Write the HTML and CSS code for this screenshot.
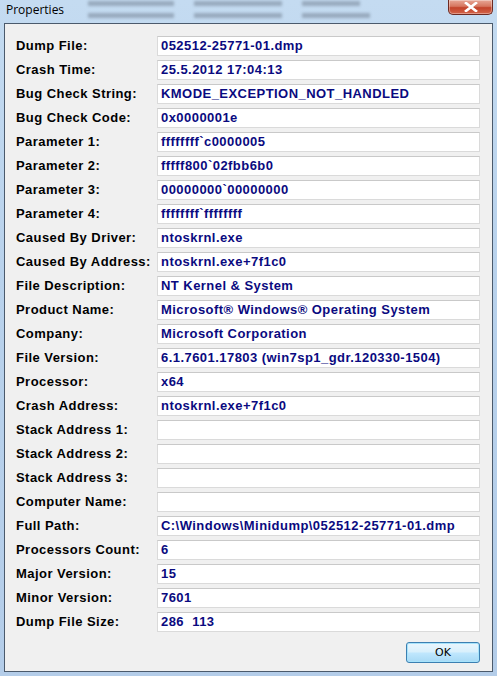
FILE: index.html
```html
<!DOCTYPE html>
<html lang="en">
<head>
    <meta charset="UTF-8">
    <title>Properties</title>
    <link rel="stylesheet" href="styles.css">
</head>
<body>
    <div class="window">
        <header class="titlebar">
            <span class="title">Properties</span>
            <div class="blur-cols">
                <div class="blur-col"><i class="b1"></i><i class="b1"></i></div>
                <div class="blur-col"><i class="b2"></i><i class="b2"></i></div>
                <div class="blur-col"><i class="b3"></i><i class="b4"></i></div>
            </div>
            <button class="close" aria-label="Close">
                <svg width="14" height="10" viewBox="0 0 14 10">
                    <path d="M2 1 L12 9 M12 1 L2 9" stroke="#fff" stroke-width="2.6" stroke-linecap="square"/>
                    <path d="M2 1 L12 9 M12 1 L2 9" stroke="#fff" stroke-width="1.4"/>
                </svg>
            </button>
        </header>
        <main class="client">
            <div class="props">
                <label>Dump File:</label><div class="box">052512-25771-01.dmp</div>
                <label>Crash Time:</label><div class="box">25.5.2012 17:04:13</div>
                <label>Bug Check String:</label><div class="box">KMODE_EXCEPTION_NOT_HANDLED</div>
                <label>Bug Check Code:</label><div class="box">0x0000001e</div>
                <label>Parameter 1:</label><div class="box">ffffffff`c0000005</div>
                <label>Parameter 2:</label><div class="box">fffff800`02fbb6b0</div>
                <label>Parameter 3:</label><div class="box">00000000`00000000</div>
                <label>Parameter 4:</label><div class="box">ffffffff`ffffffff</div>
                <label>Caused By Driver:</label><div class="box">ntoskrnl.exe</div>
                <label>Caused By Address:</label><div class="box">ntoskrnl.exe+7f1c0</div>
                <label>File Description:</label><div class="box">NT Kernel &amp; System</div>
                <label>Product Name:</label><div class="box">Microsoft® Windows® Operating System</div>
                <label>Company:</label><div class="box">Microsoft Corporation</div>
                <label>File Version:</label><div class="box">6.1.7601.17803 (win7sp1_gdr.120330-1504)</div>
                <label>Processor:</label><div class="box">x64</div>
                <label>Crash Address:</label><div class="box">ntoskrnl.exe+7f1c0</div>
                <label>Stack Address 1:</label><div class="box"></div>
                <label>Stack Address 2:</label><div class="box"></div>
                <label>Stack Address 3:</label><div class="box"></div>
                <label>Computer Name:</label><div class="box"></div>
                <label>Full Path:</label><div class="box">C:\Windows\Minidump\052512-25771-01.dmp</div>
                <label>Processors Count:</label><div class="box">6</div>
                <label>Major Version:</label><div class="box">15</div>
                <label>Minor Version:</label><div class="box">7601</div>
                <label>Dump File Size:</label><div class="box">286&nbsp;&nbsp;113</div>
            </div>
            <div class="actions">
                <button class="ok">OK</button>
            </div>
        </main>
    </div>
</body>
</html>
```

FILE: styles.css
```css
/* window frame */
* { box-sizing: border-box; }
html, body {
    margin: 0;
    padding: 0;
    background-color: #b9d1ea;
}
.window {
    width: 497px;
    height: 676px;
    background: linear-gradient(180deg, #c4dbf1 0%, #b9d2ec 40%, #b4cde9 100%);
    overflow: hidden;
}
.titlebar {
    height: 23px;
    display: flex;
    align-items: flex-start;
    padding-left: 6px;
}
.title {
    font-family: "Open Sans", "Noto Sans", sans-serif;
    font-size: 12px;
    line-height: 20px;
    color: #000;
    width: 82px;
}
/* blurred window contents behind the glass */
.blur-cols {
    display: flex;
    gap: 20px;
    flex: 1;
    padding-top: 1px;
    filter: blur(1.8px);
    opacity: 0.5;
}
.blur-col {
    display: flex;
    flex-direction: column;
    gap: 7px;
}
.blur-col i {
    display: block;
    height: 5px;
    background-color: #6d7a8c;
}
.b1 { width: 86px; }
.b2 { width: 88px; }
.b3 { width: 58px; }
.b4 { width: 68px; }
.close {
    width: 45px;
    height: 15px;
    margin-right: 4px;
    border: 1px solid #6d2a22;
    border-top: none;
    border-radius: 0 0 5px 5px;
    background: linear-gradient(180deg, #e7a796 0%, #d6765f 45%, #c2432a 55%, #d4644a 100%);
    display: flex;
    align-items: center;
    justify-content: center;
    padding: 0;
    box-shadow: inset 0 0 0 1px rgba(255, 255, 255, 0.35);
}
/* client area */
.client {
    height: 649px;
    margin: 0 4px;
    background-color: #f0f0f0;
    border: 1px solid #4b5a6c;
    padding: 12px 12px 0 11px;
}
.props {
    display: grid;
    grid-template-columns: 141px 1fr;
    row-gap: 4px;
    font-family: "Liberation Sans", Arial, sans-serif;
    font-size: 13px;
    font-weight: bold;
    letter-spacing: 0.45px;
}
.props label {
    line-height: 20px;
    color: #000;
    white-space: nowrap;
}
.props .box {
    height: 20px;
    line-height: 18px;
    background-color: #fff;
    border: 1px solid #dadada;
    border-top-color: #c9c9c9;
    padding-left: 3px;
    color: #0a0a80;
    white-space: nowrap;
    overflow: hidden;
}
.actions {
    display: flex;
    justify-content: flex-end;
    margin-top: 10px;
}
.ok {
    width: 74px;
    height: 21px;
    border: 1px solid #3c7fb1;
    border-radius: 3px;
    background: linear-gradient(180deg, #eaf6fd 0%, #d9f0fc 45%, #bee6fd 55%, #a7d9f5 100%);
    box-shadow: inset 0 0 0 1px #a7e3fb;
    font-family: "DejaVu Sans", sans-serif;
    font-size: 11px;
    color: #000;
    padding: 0;
}
```
